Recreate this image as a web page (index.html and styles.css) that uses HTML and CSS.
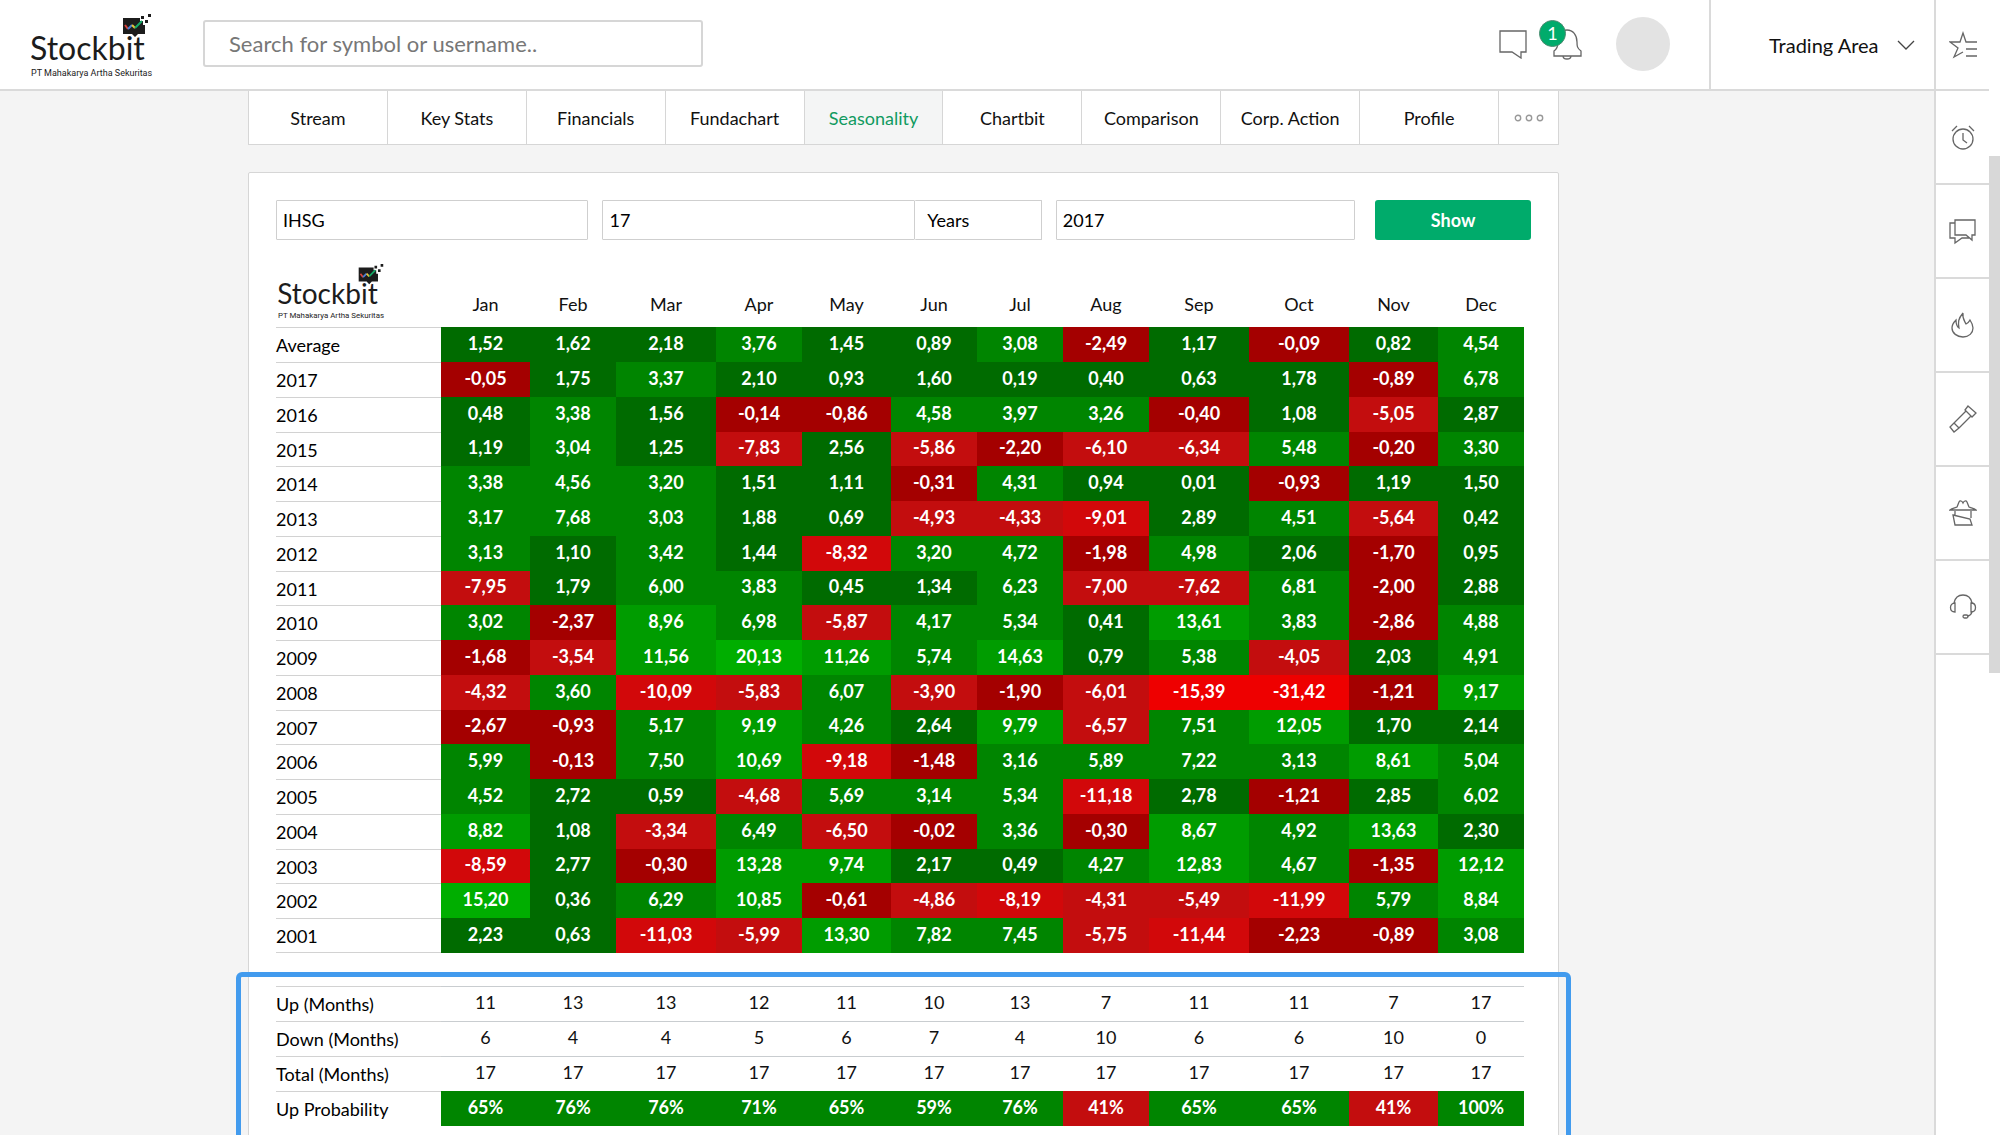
FILE: index.html
```html
<!DOCTYPE html>
<html lang="en">
<head>
<meta charset="utf-8">
<title>Seasonality - Stockbit</title>
<link rel="stylesheet" href="styles.css">
</head>
<body>
<svg class="defs" aria-hidden="true">
  <symbol id="logo" viewBox="0 0 122 66">
    <text class="logo-word" x="-1" y="46">Stockbit</text>
    <text class="logo-tag" x="0" y="62">PT Mahakarya Artha Sekuritas</text>
    <path fill="#1c1c1c" d="M92 4h17v3h3v4h2v9h-7l-3 3-3-3h-9z"/>
    <path fill="#1c1c1c" d="M110 2h3v3h-3zM114 6h3v3h-3zM117 0h3v3h-3z"/>
    <g fill="none" stroke-width="2"><path stroke="#d8433b" d="M94 11l3 4"/><path stroke="#4a7fd6" d="M97 15l4-4"/><path stroke="#e8c33a" d="M101 11l3 3"/><path stroke="#14a866" d="M104 14l7-7"/></g>
  </symbol>
</svg>
<header class="topbar">
  <a class="brand" href="#" aria-label="Stockbit"><svg class="logo"><use href="#logo"/></svg></a>
  <input class="search" type="search" placeholder="Search for symbol or username.." aria-label="Search">
  <div class="tools">
    <button class="icon-btn" aria-label="Messages"><svg viewBox="0 0 30 30"><path d="M2 2h26v21h-5v6l-9-6H2z"/></svg></button>
    <button class="icon-btn bell" aria-label="Notifications"><svg viewBox="0 0 30 32"><path d="M2 28v-5c3-2 4-5 4-9 0-7 3-12 9-12s10 5 10 12c0 4 0 6 4 9v5zM11 28c0 4 8 4 8 0"/></svg><span class="badge">1</span></button>
    <span class="avatar"></span>
  </div>
  <button class="trading">Trading Area <svg viewBox="0 0 18 10"><path d="M1 1l8 8 8-8"/></svg></button>
</header>
<main class="content">
  <nav class="tabs">
    <a href="#">Stream</a><a href="#">Key Stats</a><a href="#">Financials</a><a href="#">Fundachart</a><a href="#" class="active">Seasonality</a><a href="#">Chartbit</a><a href="#">Comparison</a><a href="#">Corp. Action</a><a href="#">Profile</a>
    <a href="#" class="more" aria-label="More"><svg viewBox="0 0 30 8"><circle cx="4" cy="4" r="2.7"/><circle cx="15" cy="4" r="2.7"/><circle cx="26" cy="4" r="2.7"/></svg></a>
  </nav>
  <section class="card">
    <form class="filters">
      <input type="text" value="IHSG" aria-label="Symbol">
      <div class="period"><input type="text" value="17" aria-label="Period"><select aria-label="Unit"><option>Years</option></select></div>
      <input type="text" value="2017" aria-label="End year">
      <button type="button" class="show">Show</button>
    </form>
    <table class="heat">
      <colgroup><col class="c-label"><col class="c-l"><col class="c-m"><col class="c-xl"><col class="c-m"><col class="c-l"><col class="c-m"><col class="c-m"><col class="c-m"><col class="c-xl"><col class="c-xl"><col class="c-l"><col class="c-m"></colgroup>
      <thead><tr><td class="logo-cell"><svg class="logo" role="img" aria-label="Stockbit"><use href="#logo"/></svg></td><th>Jan</th><th>Feb</th><th>Mar</th><th>Apr</th><th>May</th><th>Jun</th><th>Jul</th><th>Aug</th><th>Sep</th><th>Oct</th><th>Nov</th><th>Dec</th></tr></thead>
      <tbody>
<tr><th>Average</th><td class="g1">1,52</td><td class="g1">1,62</td><td class="g1">2,18</td><td class="g2">3,76</td><td class="g1">1,45</td><td class="g1">0,89</td><td class="g2">3,08</td><td class="r1">-2,49</td><td class="g1">1,17</td><td class="r1">-0,09</td><td class="g1">0,82</td><td class="g2">4,54</td></tr>
<tr><th>2017</th><td class="r1">-0,05</td><td class="g1">1,75</td><td class="g2">3,37</td><td class="g1">2,10</td><td class="g1">0,93</td><td class="g1">1,60</td><td class="g1">0,19</td><td class="g1">0,40</td><td class="g1">0,63</td><td class="g1">1,78</td><td class="r1">-0,89</td><td class="g2">6,78</td></tr>
<tr><th>2016</th><td class="g1">0,48</td><td class="g2">3,38</td><td class="g1">1,56</td><td class="r1">-0,14</td><td class="r1">-0,86</td><td class="g2">4,58</td><td class="g2">3,97</td><td class="g2">3,26</td><td class="r1">-0,40</td><td class="g1">1,08</td><td class="r2">-5,05</td><td class="g1">2,87</td></tr>
<tr><th>2015</th><td class="g1">1,19</td><td class="g2">3,04</td><td class="g1">1,25</td><td class="r2">-7,83</td><td class="g1">2,56</td><td class="r2">-5,86</td><td class="r1">-2,20</td><td class="r2">-6,10</td><td class="r2">-6,34</td><td class="g2">5,48</td><td class="r1">-0,20</td><td class="g2">3,30</td></tr>
<tr><th>2014</th><td class="g2">3,38</td><td class="g2">4,56</td><td class="g2">3,20</td><td class="g1">1,51</td><td class="g1">1,11</td><td class="r1">-0,31</td><td class="g2">4,31</td><td class="g1">0,94</td><td class="g1">0,01</td><td class="r1">-0,93</td><td class="g1">1,19</td><td class="g1">1,50</td></tr>
<tr><th>2013</th><td class="g2">3,17</td><td class="g2">7,68</td><td class="g2">3,03</td><td class="g1">1,88</td><td class="g1">0,69</td><td class="r2">-4,93</td><td class="r2">-4,33</td><td class="r3">-9,01</td><td class="g1">2,89</td><td class="g2">4,51</td><td class="r2">-5,64</td><td class="g1">0,42</td></tr>
<tr><th>2012</th><td class="g2">3,13</td><td class="g1">1,10</td><td class="g2">3,42</td><td class="g1">1,44</td><td class="r3">-8,32</td><td class="g2">3,20</td><td class="g2">4,72</td><td class="r1">-1,98</td><td class="g2">4,98</td><td class="g1">2,06</td><td class="r1">-1,70</td><td class="g1">0,95</td></tr>
<tr><th>2011</th><td class="r2">-7,95</td><td class="g1">1,79</td><td class="g2">6,00</td><td class="g2">3,83</td><td class="g1">0,45</td><td class="g1">1,34</td><td class="g2">6,23</td><td class="r2">-7,00</td><td class="r2">-7,62</td><td class="g2">6,81</td><td class="r1">-2,00</td><td class="g1">2,88</td></tr>
<tr><th>2010</th><td class="g2">3,02</td><td class="r1">-2,37</td><td class="g3">8,96</td><td class="g2">6,98</td><td class="r2">-5,87</td><td class="g2">4,17</td><td class="g2">5,34</td><td class="g1">0,41</td><td class="g3">13,61</td><td class="g2">3,83</td><td class="r1">-2,86</td><td class="g2">4,88</td></tr>
<tr><th>2009</th><td class="r1">-1,68</td><td class="r2">-3,54</td><td class="g3">11,56</td><td class="g4">20,13</td><td class="g3">11,26</td><td class="g2">5,74</td><td class="g3">14,63</td><td class="g1">0,79</td><td class="g2">5,38</td><td class="r2">-4,05</td><td class="g1">2,03</td><td class="g2">4,91</td></tr>
<tr><th>2008</th><td class="r2">-4,32</td><td class="g2">3,60</td><td class="r3">-10,09</td><td class="r2">-5,83</td><td class="g2">6,07</td><td class="r2">-3,90</td><td class="r1">-1,90</td><td class="r2">-6,01</td><td class="r4">-15,39</td><td class="r4">-31,42</td><td class="r1">-1,21</td><td class="g3">9,17</td></tr>
<tr><th>2007</th><td class="r1">-2,67</td><td class="r1">-0,93</td><td class="g2">5,17</td><td class="g3">9,19</td><td class="g2">4,26</td><td class="g1">2,64</td><td class="g3">9,79</td><td class="r2">-6,57</td><td class="g2">7,51</td><td class="g3">12,05</td><td class="g1">1,70</td><td class="g1">2,14</td></tr>
<tr><th>2006</th><td class="g2">5,99</td><td class="r1">-0,13</td><td class="g2">7,50</td><td class="g3">10,69</td><td class="r3">-9,18</td><td class="r1">-1,48</td><td class="g2">3,16</td><td class="g2">5,89</td><td class="g2">7,22</td><td class="g2">3,13</td><td class="g3">8,61</td><td class="g2">5,04</td></tr>
<tr><th>2005</th><td class="g2">4,52</td><td class="g1">2,72</td><td class="g1">0,59</td><td class="r2">-4,68</td><td class="g2">5,69</td><td class="g2">3,14</td><td class="g2">5,34</td><td class="r3">-11,18</td><td class="g1">2,78</td><td class="r1">-1,21</td><td class="g1">2,85</td><td class="g2">6,02</td></tr>
<tr><th>2004</th><td class="g3">8,82</td><td class="g1">1,08</td><td class="r2">-3,34</td><td class="g2">6,49</td><td class="r2">-6,50</td><td class="r1">-0,02</td><td class="g2">3,36</td><td class="r1">-0,30</td><td class="g3">8,67</td><td class="g2">4,92</td><td class="g3">13,63</td><td class="g1">2,30</td></tr>
<tr><th>2003</th><td class="r3">-8,59</td><td class="g1">2,77</td><td class="r1">-0,30</td><td class="g3">13,28</td><td class="g3">9,74</td><td class="g1">2,17</td><td class="g1">0,49</td><td class="g2">4,27</td><td class="g3">12,83</td><td class="g2">4,67</td><td class="r1">-1,35</td><td class="g3">12,12</td></tr>
<tr><th>2002</th><td class="g4">15,20</td><td class="g1">0,36</td><td class="g2">6,29</td><td class="g3">10,85</td><td class="r1">-0,61</td><td class="r2">-4,86</td><td class="r3">-8,19</td><td class="r2">-4,31</td><td class="r2">-5,49</td><td class="r3">-11,99</td><td class="g2">5,79</td><td class="g3">8,84</td></tr>
<tr><th>2001</th><td class="g1">2,23</td><td class="g1">0,63</td><td class="r3">-11,03</td><td class="r2">-5,99</td><td class="g3">13,30</td><td class="g2">7,82</td><td class="g2">7,45</td><td class="r2">-5,75</td><td class="r3">-11,44</td><td class="r1">-2,23</td><td class="r1">-0,89</td><td class="g2">3,08</td></tr>
      </tbody>
    </table>
    <div class="summary">
      <table class="heat stats">
        <colgroup><col class="c-label"><col class="c-l"><col class="c-m"><col class="c-xl"><col class="c-m"><col class="c-l"><col class="c-m"><col class="c-m"><col class="c-m"><col class="c-xl"><col class="c-xl"><col class="c-l"><col class="c-m"></colgroup>
        <tbody>
<tr><th>Up (Months)</th><td>11</td><td>13</td><td>13</td><td>12</td><td>11</td><td>10</td><td>13</td><td>7</td><td>11</td><td>11</td><td>7</td><td>17</td></tr>
<tr><th>Down (Months)</th><td>6</td><td>4</td><td>4</td><td>5</td><td>6</td><td>7</td><td>4</td><td>10</td><td>6</td><td>6</td><td>10</td><td>0</td></tr>
<tr><th>Total (Months)</th><td>17</td><td>17</td><td>17</td><td>17</td><td>17</td><td>17</td><td>17</td><td>17</td><td>17</td><td>17</td><td>17</td><td>17</td></tr>
<tr><th>Up Probability</th><td class="g2">65%</td><td class="g2">76%</td><td class="g2">76%</td><td class="g2">71%</td><td class="g2">65%</td><td class="g2">59%</td><td class="g2">76%</td><td class="r2">41%</td><td class="g2">65%</td><td class="g2">65%</td><td class="r2">41%</td><td class="g2">100%</td></tr>
        </tbody>
      </table>
      <div class="highlight"></div>
    </div>
  </section>
</main>
<aside class="rail">
  <button aria-label="Watchlist"><svg viewBox="0 0 28 28"><path d="M28 11H17L14 2l-3 9H1l8 6-4 9 9-5M17 18h11M17 25h11"/></svg></button>
  <button aria-label="Alerts"><svg viewBox="0 0 28 28"><circle cx="14" cy="16" r="10"/><path d="M14 10v7l4 3M3 8l5-5M20 3l5 5"/></svg></button>
  <button aria-label="Chat"><svg viewBox="0 0 28 28"><path d="M6 3h20v15h-3v5l-6-5H6zM6 6H1v15h5v5l7-5h7"/></svg></button>
  <button aria-label="Hot"><svg viewBox="0 0 28 28"><path d="M14 2c-5 6-5 9-4 15-3-2-3-5-3-8-3 3-4 5-4 8 0 5 5 9 11 9s10-4 10-9c0-3-1-5-3-8-1 2-2 3-4 4-2-4-4-6-3-11z"/></svg></button>
  <button aria-label="Screener"><svg viewBox="0 0 28 28"><path d="M19 1l8 7-4 4-7-7zM17 6L5 18l-4 4 4 5 5-4 12-12M5 18l5 5"/></svg></button>
  <button aria-label="Insider"><svg viewBox="0 0 28 28"><path d="M1 11h26c-2-2-5-2-7-3l-2-5c-1-2-3-1-4 1-1-2-3-3-4-1L8 8c-2 1-5 1-7 3zM6 12v4M22 12v7M4 16l17 4 2 6H6z"/></svg></button>
  <button aria-label="Support"><svg viewBox="0 0 28 28"><path d="M5 10c1-5 4-8 9-8s8 3 9 8M6 10c-6 0-6 9 0 9zM22 10c6 0 6 9 0 9zM23 19c-1 3-3 4-5 4"/><rect x="14" y="22" width="5" height="3" rx="1.500"/></svg></button>
</aside>
<div class="scroll"><div class="thumb"></div></div>
</body>
</html>
```

FILE: styles.css
```css
* { box-sizing: border-box; }
html, body { height: 100%; }
body {
  margin: 0;
  display: grid;
  grid-template: 91px minmax(0, 1fr) / minmax(0, 1fr) 55px 11px;
  overflow: hidden;
  background: #fff;
  color: #111;
  font: 18px/24px Lato, "Open Sans", sans-serif;
}
button, input, select { font: inherit; color: inherit; margin: 0; }
button { padding: 0; border: 0; background: none; }
a { color: inherit; text-decoration: none; }
svg { display: block; fill: none; stroke: #666; stroke-width: 1.3; }

.defs { position: absolute; width: 0; height: 0; }
.logo { width: 122px; height: 66px; stroke: none; overflow: visible; }
.logo-word { font: 32px Lato, sans-serif; fill: #1c1c1c; }
.logo-tag { font: 9px Roboto, sans-serif; fill: #1c1c1c; }

.topbar {
  display: flex;
  align-items: center;
  border-bottom: 2px solid #dadada;
  padding: 0 0 2px 31px;
}
.brand { margin-top: 6px; }
.search {
  width: 500px;
  height: 47px;
  margin-left: 50px;
  padding: 0 24px;
  border: 2px solid #d6d6d6;
  border-radius: 3px;
  background: #fff;
  font-size: 22px;
}
.search::placeholder { color: #777; opacity: 1; }
.tools { display: flex; align-items: center; margin-left: auto; padding-right: 39px; }
.icon-btn svg { width: 30px; height: 30px; }
.bell { position: relative; margin: 0 34px 0 24px; }
.bell svg { height: 32px; }
.badge {
  position: absolute;
  top: -8px;
  left: -13px;
  width: 27px;
  height: 27px;
  border: 1px solid #4d8a70;
  border-radius: 50%;
  background: #00ab6b;
  color: #fff;
  font-size: 18px;
  line-height: 25px;
}
.avatar { width: 54px; height: 54px; border-radius: 50%; background: #e3e3e3; }
.trading {
  align-self: stretch;
  display: flex;
  align-items: center;
  gap: 18px;
  width: 225px;
  margin-bottom: -2px;
  padding-left: 58px;
  border-left: 2px solid #dadada;
  font-size: 20px;
}
.trading svg { width: 18px; height: 10px; stroke: #444; }

.content {
  grid-column: 1;
  grid-row: 2;
  min-height: 0;
  overflow: hidden;
  padding: 0 375px 0 248px;
  background: #f4f4f4;
}
.tabs {
  display: flex;
  height: 54px;
  margin-bottom: 27px;
  border: 1px solid #d6d6d6;
  border-top: 0;
  background: #fff;
}
.tabs a {
  flex: 1;
  display: flex;
  align-items: center;
  justify-content: center;
  border-right: 1px solid #d6d6d6;
}
.tabs .active { background: #f4f5f5; color: #109a60; }
.tabs .more { flex: 0 0 59px; border-right: 0; }
.more svg { width: 30px; height: 8px; stroke: #999; stroke-width: 1.4; }

.card { border: 1px solid #d6d6d6; border-radius: 2px; background: #fff; padding: 27px 27px 40px; }
.filters { display: grid; grid-template-columns: 313fr 440fr 300fr 162fr; gap: 14px; height: 40px; }
.filters input, .filters select {
  width: 100%;
  min-width: 0;
  height: 40px;
  padding: 0 6px;
  border: 1px solid #cfcfcf;
  border-radius: 1px;
  background: #fff;
  color: #000;
}
.period { display: grid; grid-template-columns: 314fr 127fr; }
.filters select { appearance: none; padding: 0 12px; border-left: 0; }
.show { margin-left: 6px; border-radius: 3px; background: #00ab6b; color: #fff; font-weight: 700; }

.heat {
  width: calc(100% - 7px);
  margin-top: 23px;
  table-layout: fixed;
  border-collapse: separate;
  border-spacing: 0;
  text-align: center;
}
.c-label { width: 165px; }
.c-m { width: 86px; }
.c-l { width: 89px; }
.c-xl { width: 100px; }
.heat th, .heat td { padding: 0; }
.heat thead tr { height: 64px; }
.heat thead th { padding-bottom: 11px; vertical-align: bottom; font-weight: 400; }
.heat .logo-cell { padding-top: 1px; vertical-align: top; }
.logo-cell .logo { width: 107px; height: 58px; margin-left: 2px; }
.heat tbody tr { height: 35px; }
.heat tbody tr:nth-child(4n) { height: 34px; }
.heat tbody th { border-top: 1px solid #d2d2d2; color: #000; font-weight: 400; text-align: left; }
.heat tbody tr:last-child th { border-bottom: 1px solid #d2d2d2; }
.heat tbody td { padding-bottom: 4px; }
.heat td[class^="g"], .heat td[class^="r"] { color: #fff; font-weight: 700; }
.g1 { background: #006b00; }
.g2 { background: #008500; }
.g3 { background: #009c00; }
.g4 { background: #00ae00; }
.r1 { background: #a40000; }
.r2 { background: #c30d0e; }
.r3 { background: #d2080a; }
.r4 { background: #ee0000; }

.summary { position: relative; margin-top: 33px; }
.heat.stats { margin-top: 0; }
.heat.stats tbody tr { height: 35px; }
.heat.stats tbody tr:last-child th { border-bottom: 0; }
.stats tbody td { border-top: 1px solid #c9cdd0; }
.stats tbody td[class] { border-top: 0; }
.highlight {
  position: absolute;
  inset: -14px -40px -60px;
  border: 5px solid #429bee;
  border-radius: 6px;
  pointer-events: none;
}

.rail { grid-column: 2; grid-row: 1 / 3; border-left: 2px solid #dadada; }
.rail button { display: flex; align-items: center; justify-content: center; width: 100%; height: 94px; border-bottom: 2px solid #dadada; }
.rail button:first-child { height: 91px; }
.rail svg { width: 28px; height: 28px; }
.scroll { grid-column: 3; grid-row: 1 / 3; padding-top: 156px; }
.thumb { height: 517px; background: #d8d8d8; }
```
